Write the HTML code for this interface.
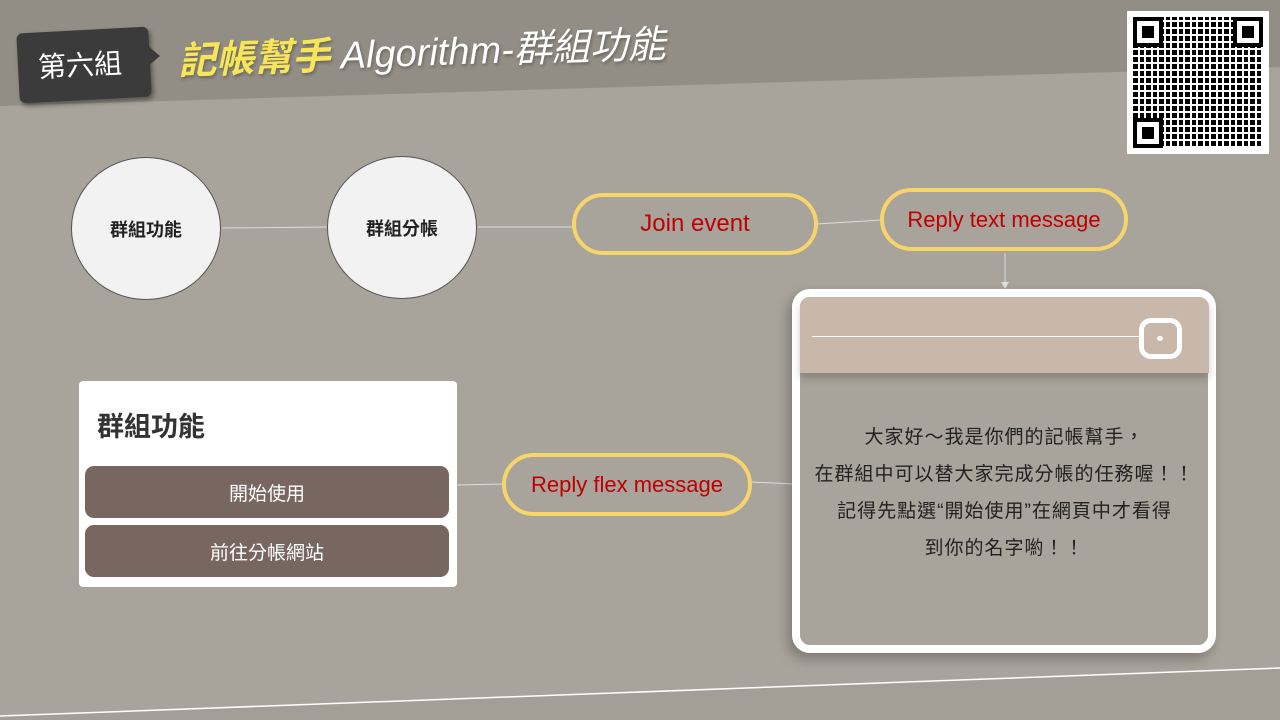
<!DOCTYPE html>
<html><head><meta charset="utf-8"><style>
*{margin:0;padding:0;box-sizing:border-box}
body{width:1280px;height:720px;overflow:hidden;position:relative;background:#a8a39b;font-family:"Liberation Sans","Noto Sans CJK TC",sans-serif}
.abs{position:absolute}
.circle{position:absolute;width:150px;height:143px;border-radius:50%;background:#f2f2f2;border:1px solid #555;display:flex;align-items:center;justify-content:center;font-size:18px;font-weight:bold;color:#222}
.pill{position:absolute;border:4px solid #f6d56b;border-radius:32px;display:flex;align-items:center;justify-content:center;color:#c00000;font-size:22px}
.btn{position:absolute;left:6px;width:364px;height:52px;background:#786760;border-radius:9px;color:#fff;font-size:19px;display:flex;align-items:center;justify-content:center}
.fp{position:absolute;width:30px;height:30px;border:4px solid #000;background:#fff}
.fp::after{content:"";position:absolute;left:5px;top:5px;width:12px;height:12px;background:#000}
</style></head><body>
<svg class="abs" style="left:0;top:0" width="1280" height="720">
<polygon points="0,0 1280,0 1280,67 0,106" fill="#928e85"/>
<polygon points="0,716 1280,668 1280,720 0,720" fill="#a39e96"/>
<line x1="0" y1="716" x2="1280" y2="668" stroke="#fff" stroke-width="1.5"/>
<line x1="222" y1="228" x2="328" y2="227" stroke="#ddd"/>
<line x1="478" y1="227" x2="574" y2="227" stroke="#ddd"/>
<line x1="816" y1="224" x2="882" y2="220" stroke="#ddd"/>
<line x1="1005" y1="253" x2="1005" y2="284" stroke="#ddd"/>
<polygon points="1001,282 1009,282 1005,289" fill="#ddd"/>
<line x1="457" y1="485" x2="504" y2="484" stroke="#ddd"/>
<line x1="750" y1="482" x2="795" y2="484" stroke="#ddd"/>
</svg>
<div class="abs" style="left:18px;top:30px;width:132px;height:70px;background:#3b3b3b;border-radius:6px;transform:rotate(-3deg);box-shadow:2px 3px 5px rgba(0,0,0,.4)"></div>
<div class="abs" style="left:148px;top:46px;width:0;height:0;border-top:10px solid transparent;border-bottom:10px solid transparent;border-left:12px solid #3b3b3b"></div>
<div class="abs" style="left:38px;top:44px;color:#fff;font-size:28px;transform:rotate(-3deg)">第六組</div>
<div class="abs" style="left:178px;top:30px;font-size:38px;font-style:italic;transform:rotate(-2deg);transform-origin:left center;white-space:nowrap;text-shadow:1px 2px 3px rgba(0,0,0,.3)"><span style="color:#f7e55a;font-weight:bold">記帳幫手</span> <span style="color:#fff">Algorithm-群組功能</span></div>
<div class="abs" style="left:1127px;top:11px;width:142px;height:143px;background:#fff"></div>
<div class="abs" style="left:1133px;top:17px;width:130px;height:131px;background:repeating-linear-gradient(90deg,#000 0 5px,#fff 5px 7px,#000 7px 11px,#fff 11px 13px),repeating-linear-gradient(0deg,#fff 0 2px,transparent 2px 7px);background-blend-mode:lighten"></div>
<div class="fp" style="left:1133px;top:17px"></div>
<div class="fp" style="left:1233px;top:17px"></div>
<div class="fp" style="left:1133px;top:118px"></div>
<div class="circle" style="left:71px;top:157px">群組功能</div>
<div class="circle" style="left:327px;top:156px">群組分帳</div>
<div class="pill" style="left:572px;top:193px;width:246px;height:62px;font-size:24px">Join event</div>
<div class="pill" style="left:880px;top:188px;width:248px;height:63px">Reply text message</div>
<div class="pill" style="left:502px;top:453px;width:250px;height:63px">Reply flex message</div>
<div class="abs" style="left:79px;top:381px;width:378px;height:206px;background:#fff;border-radius:4px">
<div class="abs" style="left:18px;top:24px;font-size:27px;font-weight:bold;color:#333">群組功能</div>
<div class="btn" style="top:85px">開始使用</div>
<div class="btn" style="top:144px">前往分帳網站</div>
</div>
<div class="abs" style="left:792px;top:289px;width:424px;height:364px;border:8px solid #fff;border-radius:18px;box-shadow:-4px 6px 12px rgba(0,0,0,.25)"></div>
<div class="abs" style="left:800px;top:297px;width:409px;height:76px;background:#c9b7a9;border-radius:10px 10px 0 0;box-shadow:0 5px 8px rgba(0,0,0,.2)"></div>
<div class="abs" style="left:812px;top:336px;width:328px;height:1px;background:#fff"></div>
<div class="abs" style="left:1139px;top:318px;width:43px;height:41px;border:5px solid #fff;border-radius:12px"></div>
<div class="abs" style="left:1157px;top:336px;width:6px;height:5px;background:#fff;border-radius:50%"></div>
<div class="abs" style="left:796px;top:419px;width:417px;text-align:center;font-size:19px;letter-spacing:1px;line-height:37px;color:#222">大家好～我是你們的記帳幫手，<br>在群組中可以替大家完成分帳的任務喔！！<br>記得先點選“開始使用”在網頁中才看得<br>到你的名字喲！！</div>
</body></html>
